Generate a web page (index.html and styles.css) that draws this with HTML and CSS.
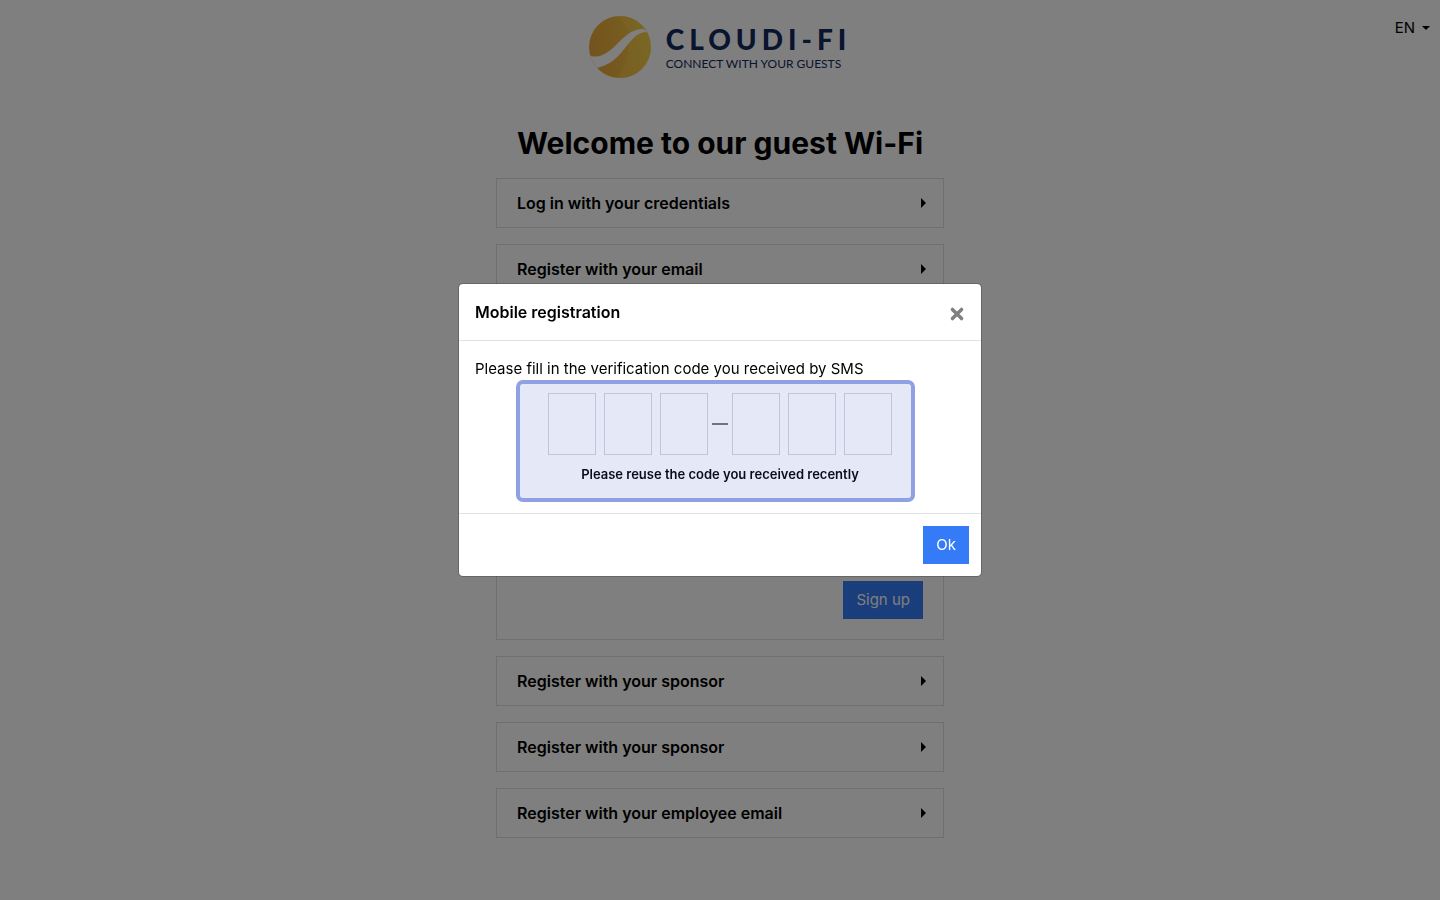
FILE: index.html
```
<!DOCTYPE html>
<html lang="en">
<head>
<meta charset="utf-8">
<title>Guest Wi-Fi</title>

<link rel="stylesheet" href="styles.css">
</head>

<body>

    <header class="topbar">
        <div class="logo">
            <svg class="globe" viewBox="0 0 62 62" aria-hidden="true">
                <defs>
                    <linearGradient id="gold" x1="0" y1="0.6" x2="1" y2="0.4">
                        <stop offset="0" stop-color="#e8a63a"/>
                        <stop offset="0.55" stop-color="#efb740"/>
                        <stop offset="1" stop-color="#f3cd48"/>
                    </linearGradient>
                    <clipPath id="round"><circle cx="31" cy="31" r="31"/></clipPath>
                </defs>
                <g clip-path="url(#round)">
                    <rect width="62" height="62" fill="url(#gold)"/>
                    <path d="M28 0C40 10 43 20 40 31C36 45 36 54 28 62H62V0Z" fill="#f5d34c" fill-opacity="0.35"/>
                    <path d="M0 39C7 43 16 39 24 32C36 20 42 13 55 13L58 16C46 16 40 28 32 37C25 45 19 49 8 52L0 52Z" fill="#fff"/>
                </g>
            </svg>
            <div class="logo-text">
                <span class="brand">CLOUDI-FI</span>
                <span class="tagline">CONNECT WITH YOUR GUESTS</span>
            </div>
        </div>
        <button class="lang" type="button">EN <span class="caret"></span></button>
    </header>

    <main class="portal">
        <h1>Welcome to our guest Wi-Fi</h1>

        <button class="card" type="button">Log in with your credentials <span class="arrow"></span></button>
        <button class="card" type="button">Register with your email <span class="arrow"></span></button>

        <!-- mobile registration, open -->
        <section class="panel">
            <button class="btn" type="button">Sign up</button>
        </section>

        <button class="card" type="button">Register with your sponsor <span class="arrow"></span></button>
        <button class="card" type="button">Register with your sponsor <span class="arrow"></span></button>
        <button class="card" type="button">Register with your employee email <span class="arrow"></span></button>
    </main>

    <div class="backdrop">
        <div class="modal" role="dialog" aria-labelledby="modal-title">
            <div class="modal-header">
                <h2 id="modal-title">Mobile registration</h2>
                <button class="close" type="button" aria-label="Close">
                    <svg viewBox="0 0 14 14"><path d="M3 3L11 11M11 3L3 11"/></svg>
                </button>
            </div>

            <div class="modal-body">
                <p>Please fill in the verification code you received by SMS</p>
                <div class="code">
                    <div class="digits">
                        <input type="text" maxlength="1" aria-label="Digit 1">
                        <input type="text" maxlength="1" aria-label="Digit 2">
                        <input type="text" maxlength="1" aria-label="Digit 3">
                        <span class="dash"></span>
                        <input type="text" maxlength="1" aria-label="Digit 4">
                        <input type="text" maxlength="1" aria-label="Digit 5">
                        <input type="text" maxlength="1" aria-label="Digit 6">
                    </div>
                    <p class="hint">Please reuse the code you received recently</p>
                    <div class="highlight"></div>
                </div>
            </div>

            <div class="modal-footer">
                <button class="btn" type="button">Ok</button>
            </div>
        </div>
    </div>

</body>
</html>
```
FILE: styles.css
```
* {
    box-sizing: border-box;
}

body {
    margin: 0;
    background-color: #fff;
    color: #000;
    font-family: Inter, "Liberation Sans", sans-serif;
    font-size: 15px;
    line-height: 24px;
}

h1, h2, p {
    margin: 0;
}

button {
    font: inherit;
    color: inherit;
    cursor: pointer;
}

/* top bar */
.topbar {
    display: grid;
    grid-template-columns: 1fr auto 1fr;
    align-items: start;
    padding: 16px 10px 0;
}

.logo {
    grid-column: 2;
    display: flex;
    align-items: center;
    gap: 15px;
}

.globe {
    width: 62px;
    height: 62px;
}

.logo-text {
    display: flex;
    flex-direction: column;
    font-family: Lato, sans-serif;
    color: #12295c;
}

.brand {
    font-size: 28px;
    font-weight: 900;
    line-height: 34px;
    letter-spacing: 5px;
}

.tagline {
    font-size: 12px;
    line-height: 16px;
}

.lang {
    justify-self: end;
    display: flex;
    align-items: center;
    gap: 7px;
    padding: 0;
    border: 0;
    background: none;
}

.caret {
    border-top: 4px solid #000;
    border-left: 4px solid transparent;
    border-right: 4px solid transparent;
}

/* login methods */
.portal {
    display: flex;
    flex-direction: column;
    gap: 16px;
    width: 100%;
    max-width: 448px;
    margin: 0 auto;
    padding: 46px 0 16px;
}

h1 {
    font-size: 30px;
    font-weight: 700;
    line-height: 38px;
    text-align: center;
    white-space: nowrap;
}

.card {
    display: flex;
    align-items: center;
    justify-content: space-between;
    height: 50px;
    padding: 0 17px 0 20px;
    border: 1px solid #dfdfdf;
    background: none;
    font-size: 16px;
    font-weight: 600;
}

.arrow {
    border-left: 5px solid #000;
    border-top: 5px solid transparent;
    border-bottom: 5px solid transparent;
}

.panel {
    display: flex;
    align-items: flex-end;
    justify-content: flex-end;
    min-height: 330px;
    padding: 20px;
    border: 1px solid #dfdfdf;
}

.btn {
    height: 38px;
    padding: 0 13px;
    border: 0;
    background-color: #357af6;
    color: #fff;
}

/* modal */
.backdrop {
    position: fixed;
    top: 0;
    right: 0;
    bottom: 0;
    left: 0;
    display: flex;
    align-items: center;
    justify-content: center;
    padding-bottom: 40px;
    background-color: rgba(0, 0, 0, 0.5);
}

.modal {
    width: 100%;
    max-width: 524px;
    border: 1px solid rgba(0, 0, 0, 0.2);
    border-radius: 5px;
    background-color: #fff;
    background-clip: padding-box;
}

.modal-header {
    display: flex;
    align-items: center;
    justify-content: space-between;
    height: 57px;
    padding: 0 16px;
    border-bottom: 1px solid #dee2e6;
}

.modal-header h2 {
    font-size: 16px;
    font-weight: 600;
    line-height: 24px;
}

.close {
    display: flex;
    padding: 4px 0 0;
    border: 0;
    background: none;
}

.close svg {
    width: 16px;
    height: 16px;
    fill: none;
    stroke: #7f7f7f;
    stroke-width: 3;
    stroke-linecap: round;
}

.modal-body {
    padding: 16px 16px 12px;
}

.code {
    position: relative;
    width: 398px;
    margin: 0 auto;
    padding: 12px 0 16px;
}

.digits {
    display: flex;
    align-items: center;
    justify-content: center;
    gap: 8px;
}

.digits input {
    width: 48px;
    height: 62px;
    padding: 0;
    border: 1px solid #d4d7dd;
    background-color: #fff;
    font-size: 32px;
    text-align: center;
}

.dash {
    width: 16px;
    height: 2px;
    margin: 0 -4px;
    background-color: #777;
}

.hint {
    margin-top: 8px;
    font-size: 13px;
    font-weight: 600;
    line-height: 22px;
    text-align: center;
}

/* coloured frame laid over the code fields */
.highlight {
    position: absolute;
    top: -1px;
    right: 4px;
    bottom: -1px;
    left: -5px;
    border: 4px solid #8fa1e2;
    border-radius: 7px;
    background-color: rgba(70, 90, 200, 0.14);
    pointer-events: none;
}

.modal-footer {
    display: flex;
    justify-content: flex-end;
    padding: 12px;
    border-top: 1px solid #dee2e6;
}
```
